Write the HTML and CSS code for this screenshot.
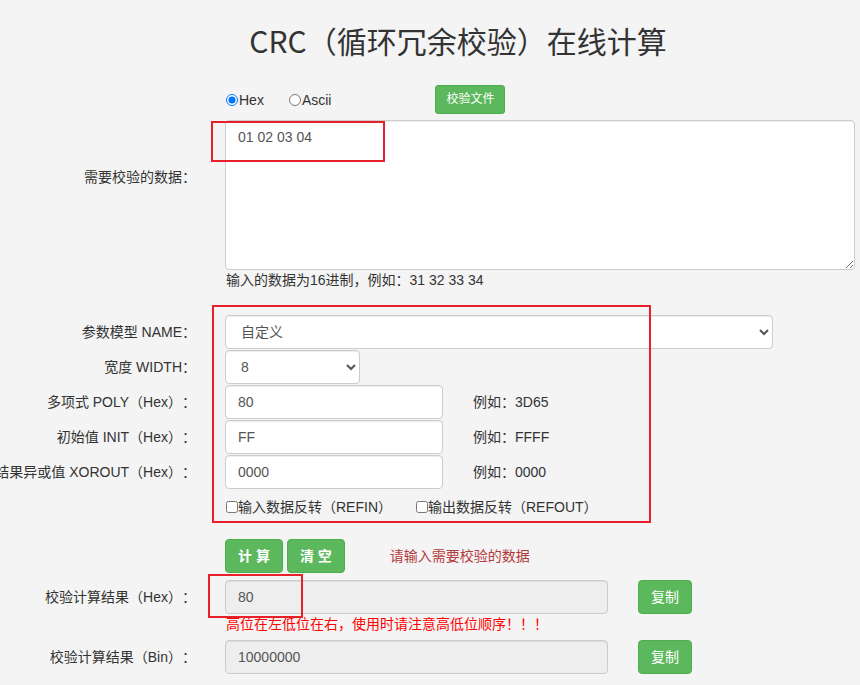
FILE: index.html
```html
<!DOCTYPE html>
<html lang="zh-CN">
<head>
<meta charset="utf-8">
<title>CRC在线计算</title>
<link rel="stylesheet" href="styles.css">
</head>
<body>
<div class="page">
  <h1 class="title">CRC（循环冗余校验）在线计算</h1>
  <form class="form">
    <div class="row row-mode">
      <div class="label"></div>
      <div class="field field-mode">
        <label class="radio"><input type="radio" name="mode" checked>Hex</label>
        <label class="radio radio-ascii"><input type="radio" name="mode">Ascii</label>
        <button type="button" class="btn btn-sm btn-file">校验文件</button>
      </div>
    </div>
    <div class="row row-data">
      <div class="label label-top">需要校验的数据：</div>
      <div class="field">
        <textarea class="control textarea">01 02 03 04</textarea>
        <div class="help">输入的数据为16进制，例如：31 32 33 34</div>
      </div>
    </div>
    <div class="row row-param row-first">
      <div class="label">参数模型 NAME：</div>
      <div class="field">
        <select class="control select select-name"><option>自定义</option></select>
      </div>
    </div>
    <div class="row row-param">
      <div class="label">宽度 WIDTH：</div>
      <div class="field">
        <select class="control select select-width"><option>8</option></select>
      </div>
    </div>
    <div class="row row-param">
      <div class="label">多项式 POLY（Hex）：</div>
      <div class="field">
        <input class="control input-short" type="text" value="80">
        <span class="hint">例如：3D65</span>
      </div>
    </div>
    <div class="row row-param">
      <div class="label">初始值 INIT（Hex）：</div>
      <div class="field">
        <input class="control input-short" type="text" value="FF">
        <span class="hint">例如：FFFF</span>
      </div>
    </div>
    <div class="row row-param">
      <div class="label">结果异或值 XOROUT（Hex）：</div>
      <div class="field">
        <input class="control input-short" type="text" value="0000">
        <span class="hint">例如：0000</span>
      </div>
    </div>
    <div class="row row-param">
      <div class="label"></div>
      <div class="field">
        <label class="check"><input type="checkbox">输入数据反转（REFIN）</label>
        <label class="check check-out"><input type="checkbox">输出数据反转（REFOUT）</label>
      </div>
    </div>
    <div class="row row-actions">
      <div class="label"></div>
      <div class="field">
        <button type="button" class="btn btn-main">计 算</button>
        <button type="button" class="btn btn-main btn-clear">清 空</button>
        <span class="msg">请输入需要校验的数据</span>
      </div>
    </div>
    <div class="row row-result">
      <div class="label">校验计算结果（Hex）：</div>
      <div class="field">
        <input class="control input-result" type="text" value="80" readonly>
        <button type="button" class="btn btn-copy">复制</button>
      </div>
    </div>
    <div class="row row-warn">
      <div class="label"></div>
      <div class="field warn">高位在左低位在右，使用时请注意高低位顺序！！！</div>
    </div>
    <div class="row row-result row-bin">
      <div class="label">校验计算结果（Bin）：</div>
      <div class="field">
        <input class="control input-result" type="text" value="10000000" readonly>
        <button type="button" class="btn btn-copy">复制</button>
      </div>
    </div>
  </form>
  <div class="mark mark-data"></div>
  <div class="mark mark-params"></div>
  <div class="mark mark-result"></div>
</div>
</body>
</html>
```

FILE: styles.css
```css
html, body {
  margin: 0;
  padding: 0;
  background: #f4f4f4;
}
body {
  font-family: "Liberation Sans", "Noto Sans CJK SC", sans-serif;
  font-size: 14px;
  line-height: 20px;
  color: #333;
  overflow: hidden;
  text-spacing-trim: space-all;
}
.page {
  position: relative;
  width: 860px;
  height: 685px;
  box-sizing: border-box;
  padding-top: 20px;
}
.title {
  margin: 0;
  font-family: "Noto Sans CJK SC", sans-serif;
  font-size: 30px;
  font-weight: 400;
  line-height: 40px;
  text-align: center;
  color: #333;
  padding-left: 56px;
}
.form {
  margin: 0;
}
.row {
  display: grid;
  grid-template-columns: 196px 1fr;
  column-gap: 29px;
}
.label {
  display: flex;
  justify-content: flex-end;
  align-items: center;
  white-space: nowrap;
  color: #333;
}
.label-top {
  align-items: flex-start;
  padding-top: 47px;
}
.field {
  display: flex;
  align-items: center;
  white-space: nowrap;
}
.row-mode {
  margin-top: 25px;
  height: 29px;
}
.radio {
  display: flex;
  align-items: center;
}
.radio input {
  margin: 0 1px 0 1px;
  width: 12px;
  height: 12px;
}
.radio-ascii {
  margin-left: 24px;
}
.btn {
  font-family: "Liberation Sans", "Noto Sans CJK SC", sans-serif;
  background: #5cb85c;
  border: 1px solid #4cae4c;
  color: #fff;
  border-radius: 4px;
  font-size: 14px;
  line-height: 20px;
  padding: 6px 12px;
  height: 34px;
  cursor: pointer;
}
.btn-sm {
  font-size: 12px;
  line-height: 17px;
  padding: 5px 10px;
  height: 29px;
  border-radius: 3px;
}
.btn-file {
  margin-left: 104px;
}
.row-data {
  margin-top: 6px;
}
.control {
  box-sizing: border-box;
  font-family: "Liberation Sans", "Noto Sans CJK SC", sans-serif;
  font-size: 14px;
  line-height: 20px;
  color: #555;
  background: #fff;
  border: 1px solid #ccc;
  border-radius: 4px;
  height: 34px;
  padding: 6px 12px;
  margin: 0;
  box-shadow: inset 0 1px 1px rgba(0, 0, 0, .075);
}
.textarea {
  display: block;
  width: 630px;
  height: 150px;
  resize: vertical;
}
.field:has(.textarea) {
  flex-direction: column;
  align-items: flex-start;
}
.help {
  line-height: 20px;
  color: #333;
  padding-left: 1px;
}
.row-param {
  height: 34px;
  margin-top: 1px;
}
.row-first {
  margin-top: 25px;
}
.select {
  padding: 6px 11px;
}
.select-name {
  width: 548px;
}
.select-width {
  width: 135px;
}
.input-short {
  width: 218px;
}
.hint {
  margin-left: 30px;
  color: #333;
}
.check {
  display: flex;
  align-items: center;
}
.check input {
  margin: 0 0 0 1px;
  width: 12px;
  height: 12px;
}
.check-out {
  margin-left: 23px;
}
.row-actions {
  margin-top: 15px;
  height: 34px;
}
.btn-main {
  font-weight: 700;
  padding: 6px 12px;
}
.btn-clear {
  margin-left: 4px;
}
.msg {
  margin-left: 45px;
  color: #b33a3c;
}
.row-result {
  margin-top: 7px;
  height: 34px;
}
.input-result {
  width: 383px;
  background: #eee;
}
.btn-copy {
  margin-left: 30px;
  padding: 6px 12px;
  width: 54px;
}
.row-warn {
  height: 20px;
}
.warn {
  color: #f00;
  padding-left: 1px;
}
.row-bin {
  margin-top: 6px;
}
.mark {
  position: absolute;
  border: 2px solid #e8202a;
  box-sizing: border-box;
  pointer-events: none;
}
.mark-data {
  left: 211px;
  top: 121px;
  width: 174px;
  height: 41px;
}
.mark-params {
  left: 212px;
  top: 305px;
  width: 439px;
  height: 218px;
}
.mark-result {
  left: 208px;
  top: 574px;
  width: 95px;
  height: 44px;
}
```
